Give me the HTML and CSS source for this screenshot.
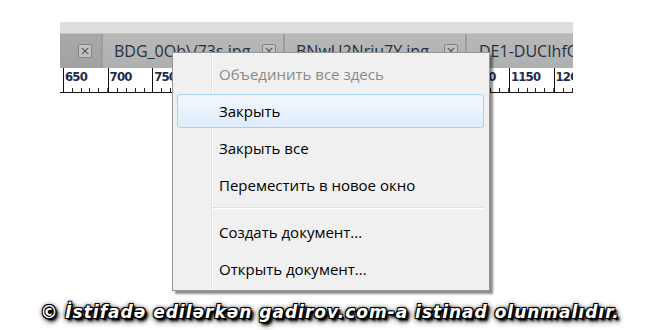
FILE: index.html
```html
<!DOCTYPE html>
<html lang="ru">
<head>
  <meta charset="UTF-8" />
  <title>Контекстное меню вкладки</title>
  <link rel="stylesheet" href="styles.css">
</head>
<body>
  <div class="page">
    <div class="strip">
      <div class="top-band"></div>
      <div class="tabs">
        <div class="tab tab-first">
          <span class="close-btn">×</span>
        </div>
        <div class="tab">
          <span class="tab-name">BDG_0Ob\/73s.jpg</span>
          <span class="close-btn">×</span>
        </div>
        <div class="tab">
          <span class="tab-name">BNwU2Nriu7Y.jpg</span>
          <span class="close-btn">×</span>
        </div>
        <div class="tab tab-last">
          <span class="tab-name">DE1-DUCIhfQ.jpg</span>
        </div>
      </div>
      <div class="ruler" id="ruler">
        <div class="ruler-lead"></div>
      </div>
    </div>

    <div class="menu">
      <div class="menu-item disabled">Объединить все здесь</div>
      <div class="menu-item hover">Закрыть</div>
      <div class="menu-item">Закрыть все</div>
      <div class="menu-item">Переместить в новое окно</div>
      <div class="menu-sep"></div>
      <div class="menu-item">Создать документ...</div>
      <div class="menu-item">Открыть документ...</div>
    </div>

    <div class="credit">© İstifadə edilərkən gadirov.com-a istinad olunmalıdır.</div>
  </div>

  <script>
    const ruler = document.getElementById("ruler");
    for (let v = 650; v <= 1200; v += 50) {
      const seg = document.createElement("div");
      seg.className = "ruler-seg";
      seg.innerHTML = `<span class="ruler-label">${v}</span>`;
      ruler.appendChild(seg);
    }
  </script>
</body>
</html>
```

FILE: styles.css
```css
body {
  margin: 0;
  background: #fff;
  font-family: "Open Sans", "Noto Sans", sans-serif;
}
.page {
  position: relative;
  width: 660px;
  height: 330px;
  display: flex;
  flex-direction: column;
  overflow: hidden;
}
.strip {
  margin: 22px 0 0 60px;
  width: 513px;
}
.top-band {
  height: 11px;
  background: #dedede;
  border-bottom: 1px solid #c4c4c4;
}
.tabs {
  height: 34px;
  display: flex;
  gap: 2px;
  background: #9d9d9d;
  overflow: hidden;
}
.tab {
  flex: 0 0 180px;
  display: flex;
  align-items: center;
  padding: 0 7px 0 11px;
  box-sizing: border-box;
  background: linear-gradient(#b9b9b9, #afafaf);
}
.tab-first {
  flex-basis: 41px;
  justify-content: flex-end;
  padding-right: 9px;
  background: linear-gradient(#a9a9a9, #a2a2a2);
}
.tab-last {
  flex: 1 0 auto;
  padding-left: 12px;
}
.tab-name {
  flex: 1;
  font-size: 16px;
  color: #263042;
  white-space: nowrap;
  overflow: hidden;
}
.close-btn {
  width: 14px;
  height: 14px;
  box-sizing: border-box;
  border: 1px solid #858585;
  border-radius: 2px;
  background: #c2c2c2;
  color: #555;
  font-family: "DejaVu Sans", sans-serif;
  font-size: 13px;
  line-height: 11px;
  text-align: center;
}
.ruler {
  height: 25px;
  display: flex;
  background:
    linear-gradient(#111, #111) bottom / 100% 1px no-repeat,
    #fff;
  overflow: hidden;
}
.ruler-lead {
  flex: 0 0 3px;
}
.ruler-seg {
  flex: 0 0 44.6px;
  box-sizing: border-box;
  border-left: 1px solid #111;
  padding-left: 1px;
  line-height: 15px;
  background: repeating-linear-gradient(90deg, transparent 0 7.9px, #222 7.9px 8.9px) bottom / 100% 5px no-repeat;
}
.ruler-label {
  font-family: "DejaVu Sans Condensed", "DejaVu Sans", sans-serif;
  font-weight: bold;
  font-size: 13px;
  color: #1d2a52;
  letter-spacing: -0.8px;
}
.menu {
  position: absolute;
  left: 172px;
  top: 52px;
  width: 318px;
  box-sizing: border-box;
  padding: 4px 5px 4px 4px;
  background:
    linear-gradient(90deg, transparent 38px, #e2e3e3 38px 39px, #fff 39px 40px, transparent 40px),
    #f0f0f0;
  border: 1px solid #979797;
  box-shadow: 3px 3px 2px rgba(0, 0, 0, 0.45);
  display: flex;
  flex-direction: column;
  gap: 3px;
}
.menu-item {
  height: 34px;
  box-sizing: border-box;
  display: flex;
  align-items: center;
  padding-left: 41px;
  font-size: 15px;
  font-weight: 500;
  color: #000;
  border: 1px solid transparent;
  border-radius: 3px;
}
.menu-item.disabled {
  color: #8a8a8a;
}
.menu-item.hover {
  border-color: #a8d2f4;
  background: linear-gradient(#f3f8fd, #dfecfb);
}
.menu-sep {
  height: 1px;
  margin: 2px 0 3px 35px;
  background: #e0e0e0;
  border-bottom: 1px solid #fff;
}
.credit {
  margin-top: auto;
  margin-bottom: 8px;
  text-align: center;
  font-family: "DejaVu Sans", sans-serif;
  font-weight: bold;
  font-style: italic;
  font-size: 17px;
  letter-spacing: 1px;
  color: #fff;
  text-shadow:
    1px 1px 0 #000, -1px -1px 0 #000, 1px -1px 0 #000, -1px 1px 0 #000,
    2px 2px 1px #000, 3px 3px 3px #000, 0 0 5px #000, 2px 3px 6px #000;
}
```
